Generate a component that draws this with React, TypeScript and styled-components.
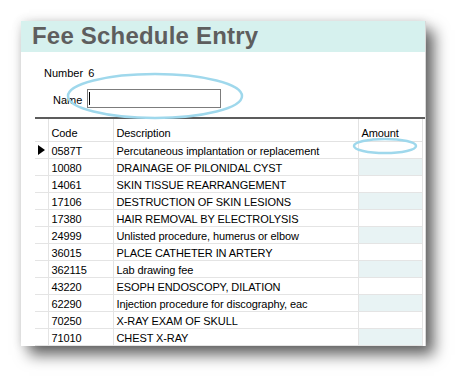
import styled, { createGlobalStyle } from 'styled-components';

const rows = [
  ['0587T', 'Percutaneous implantation or replacement'],
  ['10080', 'DRAINAGE OF PILONIDAL CYST'],
  ['14061', 'SKIN TISSUE REARRANGEMENT'],
  ['17106', 'DESTRUCTION OF SKIN LESIONS'],
  ['17380', 'HAIR REMOVAL BY ELECTROLYSIS'],
  ['24999', 'Unlisted procedure, humerus or elbow'],
  ['36015', 'PLACE CATHETER IN ARTERY'],
  ['362115', 'Lab drawing fee'],
  ['43220', 'ESOPH ENDOSCOPY, DILATION'],
  ['62290', 'Injection procedure for discography, eac'],
  ['70250', 'X-RAY EXAM OF SKULL'],
  ['71010', 'CHEST X-RAY'],
];

export default function App() {
  return (
    <Page>
      <GlobalStyle />
      <Window>
        <Header>
          <Title>Fee Schedule Entry</Title>
        </Header>
        <Form>
          <FieldRow>
            <Label>Number</Label>
            <Value>6</Value>
          </FieldRow>
          <FieldRow $indent>
            <Label>Name</Label>
            <NameBox>
              <Caret />
            </NameBox>
          </FieldRow>
        </Form>
        <Divider />
        <Grid>
          <colgroup>
            <col style={{ width: 13 }} />
            <col style={{ width: 65 }} />
            <col style={{ width: 245 }} />
            <col style={{ width: 64 }} />
          </colgroup>
          <thead>
            <tr>
              <HeadCell $first />
              <HeadCell>Code</HeadCell>
              <HeadCell>Description</HeadCell>
              <HeadCell>Amount</HeadCell>
            </tr>
          </thead>
          <tbody>
            {rows.map(([code, desc], i) => (
              <tr key={code}>
                <Indicator>
                  {i === 0 && (
                    <svg width="7" height="10" viewBox="0 0 7 10">
                      <path d="M0 0 L7 5 L0 10 Z" fill="#000" />
                    </svg>
                  )}
                </Indicator>
                <Cell>{code}</Cell>
                <Cell>{desc}</Cell>
                <AmountCell $shaded={i % 2 === 1} />
              </tr>
            ))}
          </tbody>
        </Grid>
        <Marks width="405" height="325" viewBox="0 0 405 325">
          <ellipse cx="134" cy="75" rx="87" ry="22" fill="none" stroke="#9fd8ec" strokeWidth="2.5" />
          <ellipse cx="364" cy="125" rx="31" ry="7" fill="none" stroke="#9fd8ec" strokeWidth="2.5" />
        </Marks>
      </Window>
    </Page>
  );
}

const GlobalStyle = createGlobalStyle`
  body {
    margin: 0;
    background: #fff;
    font-family: "Liberation Sans", Arial, sans-serif;
  }
`;

const Page = styled.div`
  width: 468px;
  height: 388px;
  padding: 21px 0 0 21px;
  box-sizing: border-box;
  overflow: hidden;
`;

const Window = styled.div`
  position: relative;
  width: 405px;
  height: 325px;
  background: #fff;
  border-right: 1px solid #d8d8d8;
  box-sizing: border-box;
  box-shadow: 8px 9px 14px rgba(0, 0, 0, 0.6), 0 0 10px rgba(0, 0, 0, 0.12);
`;

const Header = styled.div`
  height: 31px;
  background: #d6f1ee;
  display: flex;
  align-items: flex-end;
  padding-left: 11px;
`;

const Title = styled.h1`
  margin: 0 0 2px;
  font-size: 24px;
  line-height: 28px;
  font-weight: bold;
  color: #5e5e5e;
  letter-spacing: 0.2px;
`;

const Form = styled.div`
  display: flex;
  flex-direction: column;
  gap: 9px;
  padding: 15px 0 0 23px;
  height: 65px;
  box-sizing: border-box;
`;

const FieldRow = styled.div<{ $indent?: boolean }>`
  display: flex;
  align-items: flex-end;
  gap: 5px;
  padding-left: ${(p) => (p.$indent ? '9px' : '0')};
  font-size: 11px;
  line-height: 13px;
  color: #000;
`;

const Label = styled.span``;

const Value = styled.span``;

const NameBox = styled.div`
  width: 134px;
  height: 19px;
  box-sizing: border-box;
  border: 1px solid #7c7c7c;
  background: #fff;
  padding: 2px 0 0 1px;
  margin-bottom: -1px;
`;

const Caret = styled.div`
  width: 1px;
  height: 13px;
  background: #000;
`;

const Divider = styled.div`
  margin-left: 14px;
  height: 2px;
  background: #5c5c5c;
`;

const Grid = styled.table`
  margin: 0 0 0 14px;
  border-collapse: collapse;
  table-layout: fixed;
  width: 387px;
  font-size: 11px;
  letter-spacing: -0.1px;
  color: #000;
`;

const HeadCell = styled.th<{ $first?: boolean }>`
  height: 22px;
  padding: 7px 0 0 3px;
  text-align: left;
  font-weight: normal;
  border-left: ${(p) => (p.$first ? 'none' : '1px solid #e2e2e2')};
  border-right: 1px solid #e2e2e2;
  border-bottom: 1px solid #e2e2e2;
  box-sizing: border-box;
  vertical-align: middle;
  white-space: nowrap;
`;

const Cell = styled.td`
  height: 17px;
  padding: 2px 0 0 3px;
  border: 1px solid #e4e4e4;
  box-sizing: border-box;
  white-space: nowrap;
  overflow: hidden;
  line-height: 14px;
`;

const Indicator = styled.td`
  height: 17px;
  padding: 1px 0 0 3px;
  border-bottom: 1px solid #e4e4e4;
  border-right: 1px solid #e4e4e4;
  box-sizing: border-box;
  vertical-align: middle;
  line-height: 0;
`;

const AmountCell = styled.td<{ $shaded?: boolean }>`
  height: 17px;
  border: 1px solid #e4e4e4;
  box-sizing: border-box;
  background: ${(p) => (p.$shaded ? '#e8f3f4' : '#fff')};
`;

const Marks = styled.svg`
  position: absolute;
  left: 0;
  top: 0;
  pointer-events: none;
`;
